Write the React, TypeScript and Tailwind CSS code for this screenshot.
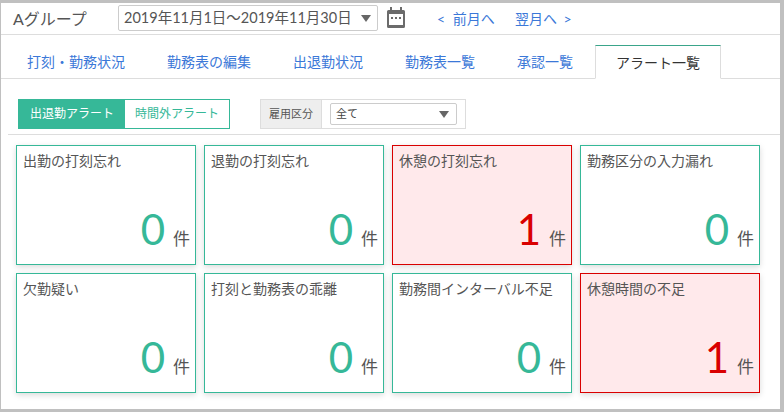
import React from "react";

const FONT = "font-['Lato','Noto_Sans_CJK_JP',sans-serif]";

const tabs = ["打刻・勤務状況", "勤務表の編集", "出退勤状況", "勤務表一覧", "承認一覧"];

const cards = [
  { t: "出勤の打刻忘れ", n: 0 },
  { t: "退勤の打刻忘れ", n: 0 },
  { t: "休憩の打刻忘れ", n: 1 },
  { t: "勤務区分の入力漏れ", n: 0 },
  { t: "欠勤疑い", n: 0 },
  { t: "打刻と勤務表の乖離", n: 0 },
  { t: "勤務間インターバル不足", n: 0 },
  { t: "休憩時間の不足", n: 1 },
];

function Caret() {
  return <span className="shrink-0 w-0 h-0 border-x-[5.5px] border-x-transparent border-t-[7px] border-t-[#666]" />;
}

export default function App() {
  return (
    <div className={`${FONT} w-[784px] h-[412px] bg-[#c0c0c0] pt-[3px] pl-px pr-1 pb-[3px] overflow-hidden text-[#555]`}>
      <div className="w-[779px] h-[406px] bg-white flex flex-col">
        <div className="h-[32px] shrink-0 border-b border-[#ddd] flex items-center">
          <div className="ml-[12px] w-[105px] text-[16px] text-[#555]">Aグループ</div>
          <div className="w-[260px] h-[26px] mb-[1px] border border-[#ccc] rounded-[2px] flex items-center justify-between pl-[5px] pr-[6px] text-[14.5px]">
            <span className="whitespace-nowrap">2019年11月1日～2019年11月30日</span>
            <Caret />
          </div>
          <svg className="ml-[9px] mb-[3px]" width="18" height="21" viewBox="0 0 18 21" fill="#6b6b6b">
            <path fillRule="evenodd" d="M3 0h2v3h8V0h2v3h1.500A1.500 1.500 0 0 1 18 4.500v15a1.500 1.500 0 0 1-1.500 1.500h-15A1.500 1.500 0 0 1 0 19.500v-15A1.500 1.500 0 0 1 1.500 3H3zM2 7v11h14V7z" />
            <rect x="4" y="10" width="2" height="2" />
            <rect x="8" y="10" width="2" height="2" />
            <rect x="12" y="10" width="2" height="2" />
          </svg>
          <a className="ml-[32px] w-[58px] text-[14px] text-[#3b78d8] whitespace-nowrap"><span className="mr-[4px]">&lt;</span> 前月へ</a>
          <a className="ml-[20px] text-[14px] text-[#3b78d8] whitespace-nowrap">翌月へ <span className="ml-[3px]">&gt;</span></a>
        </div>
        <div className="h-[44px] shrink-0 border-b border-[#ddd] flex items-end pl-[5px] text-[14px]">
          {tabs.map((t) => (
            <div key={t} className="px-[21px] h-[33px] flex items-center text-[#3b78d8]">{t}</div>
          ))}
          <div className="px-[20px] ml-px h-[34px] -mb-px bg-white border border-[#ddd] border-b-white border-t-[#3aa58a] flex items-center text-[#333]">
            アラート一覧
          </div>
        </div>
        <div className="h-[56px] shrink-0 ml-[7px] border-b border-[#ddd] flex items-start pt-[20px] pl-[10px]">
          <div className="h-[30px] w-[212px] border border-[#36b898] flex text-[12px]">
            <div className="w-[106px] bg-[#36b898] text-white flex items-center justify-center">出退勤アラート</div>
            <div className="flex-1 text-[#36b898] flex items-center justify-center">時間外アラート</div>
          </div>
          <div className="ml-[30px] h-[30px] w-[206px] border border-[#ddd] flex items-center">
            <div className="w-[61px] h-full bg-[#eee] border-r border-[#ddd] flex items-center justify-center text-[11px]">雇用区分</div>
            <div className="ml-2 w-[127px] h-[22px] border border-[#ccc] rounded-[2px] flex items-center justify-between pl-[5px] pr-[7px] text-[11px] text-[#444]">
              <span>全て</span>
              <Caret />
            </div>
          </div>
        </div>
        <div className="grid grid-cols-[repeat(4,180px)] auto-rows-[120px] gap-2 pl-[15px] pt-[10px]">
          {cards.map((c) => {
            const alert = c.n > 0;
            return (
              <div
                key={c.t}
                className={`border flex flex-col justify-between pl-[6px] pr-[5px] pt-[5px] pb-[7px] shadow-[0_2px_6px_rgba(0,0,0,0.15)] ${alert ? "border-[#d90000] bg-[#ffe9eb]" : "border-[#36b898] bg-white"}`}
              >
                <div className="text-[14px] leading-[20px]">{c.t}</div>
                <div className="flex items-baseline justify-end h-[56px] leading-[56px]">
                  <span className={`text-[42px] ${alert ? "text-[#d90000]" : "text-[#36b898]"}`}>{c.n}</span>
                  <span className="ml-[8px] text-[17px]">件</span>
                </div>
              </div>
            );
          })}
        </div>
      </div>
    </div>
  );
}
